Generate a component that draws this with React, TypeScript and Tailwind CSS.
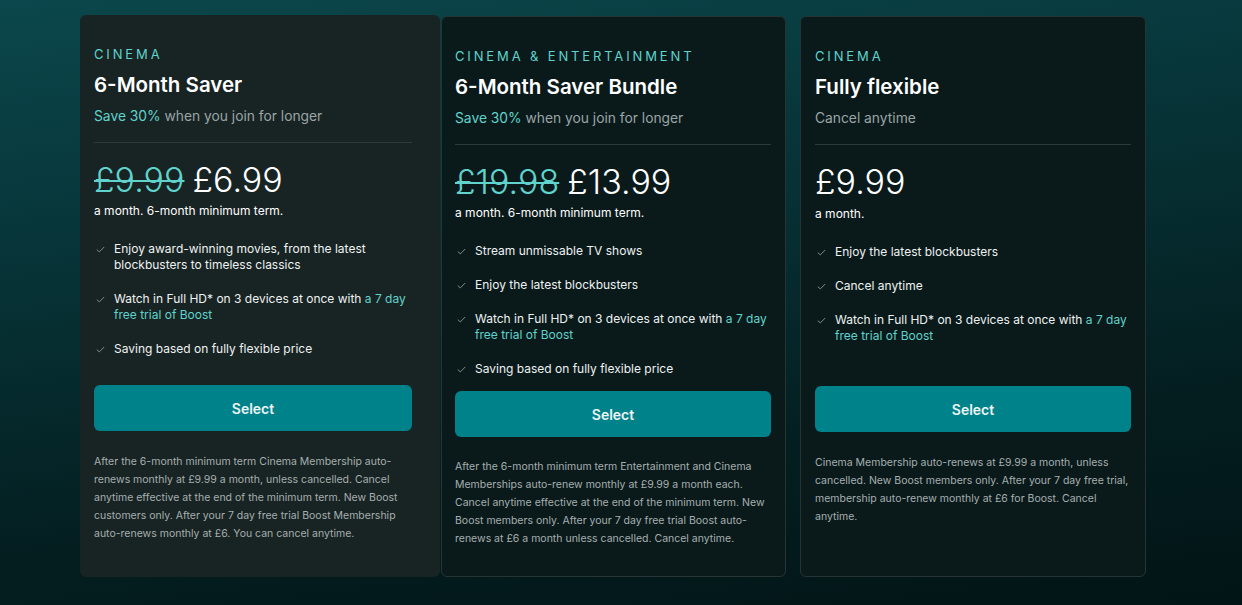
import React from 'react';

type Feature = {
    text: string;
    link?: string;
};

type Plan = {
    category: string;
    title: string;
    save?: string;
    subtitle: string;
    oldPrice?: string;
    price: string;
    term: string;
    features: Feature[];
    disclaimer: string;
};

const plans: Plan[] = [
    {
        category: 'Cinema',
        title: '6-Month Saver',
        save: 'Save 30%',
        subtitle: 'when you join for longer',
        oldPrice: '£9.99',
        price: '£6.99',
        term: 'a month. 6-month minimum term.',
        features: [
            { text: 'Enjoy award-winning movies, from the latest blockbusters to timeless classics' },
            { text: 'Watch in Full HD* on 3 devices at once with ', link: 'a 7 day free trial of Boost' },
            { text: 'Saving based on fully flexible price' },
        ],
        disclaimer:
            'After the 6-month minimum term Cinema Membership auto-renews monthly at £9.99 a month, unless cancelled. Cancel anytime effective at the end of the minimum term. New Boost customers only. After your 7 day free trial Boost Membership auto-renews monthly at £6. You can cancel anytime.',
    },
    {
        category: 'Cinema & Entertainment',
        title: '6-Month Saver Bundle',
        save: 'Save 30%',
        subtitle: 'when you join for longer',
        oldPrice: '£19.98',
        price: '£13.99',
        term: 'a month. 6-month minimum term.',
        features: [
            { text: 'Stream unmissable TV shows' },
            { text: 'Enjoy the latest blockbusters' },
            { text: 'Watch in Full HD* on 3 devices at once with ', link: 'a 7 day free trial of Boost' },
            { text: 'Saving based on fully flexible price' },
        ],
        disclaimer:
            'After the 6-month minimum term Entertainment and Cinema Memberships auto-renew monthly at £9.99 a month each. Cancel anytime effective at the end of the minimum term. New Boost members only. After your 7 day free trial Boost auto-renews at £6 a month unless cancelled. Cancel anytime.',
    },
    {
        category: 'Cinema',
        title: 'Fully flexible',
        subtitle: 'Cancel anytime',
        price: '£9.99',
        term: 'a month.',
        features: [
            { text: 'Enjoy the latest blockbusters' },
            { text: 'Cancel anytime' },
            { text: 'Watch in Full HD* on 3 devices at once with ', link: 'a 7 day free trial of Boost' },
        ],
        disclaimer:
            'Cinema Membership auto-renews at £9.99 a month, unless cancelled. New Boost members only. After your 7 day free trial, membership auto-renew monthly at £6 for Boost. Cancel anytime.',
    },
];

function Check() {
    return (
        <svg width="9" height="7" viewBox="0 0 9 7" fill="none" className="mt-[5px] shrink-0">
            <path d="M0.8 3.6 L3.3 5.9 L8.2 1" stroke="#7f8d8d" strokeWidth="1" />
        </svg>
    );
}

type CardProps = {
    plan: Plan;
    className: string;
    termClass: string;
    buttonClass: string;
    noteClass: string;
};

function PlanCard({ plan, className, termClass, buttonClass, noteClass }: CardProps) {
    return (
        <div className={`flex flex-col rounded-md ${className}`}>
            <div className="text-[13px] leading-4 uppercase tracking-[0.22em] text-[#5fd3cc]">
                {plan.category}
            </div>
            <h2 className="mt-[11px] text-[20.5px] leading-6 font-semibold text-white">
                {plan.title}
            </h2>
            <p className="mt-[9px] text-[13.8px] leading-5 text-[#9aa5a5]">
                {plan.save ? <span className="text-[#5fd3cc]">{plan.save} </span> : null}
                {plan.subtitle}
            </p>
            <hr className="mt-[16px] border-[#2b3a3a]" />
            <div className="mt-[17px] flex items-baseline gap-[8px] text-[34px] leading-10 font-light">
                {plan.oldPrice ? (
                    <span className="text-[#5fd3cc] line-through decoration-[2px]">{plan.oldPrice}</span>
                ) : null}
                <span className="text-white">{plan.price}</span>
            </div>
            <div className={`text-[12px] leading-4 text-white ${termClass}`}>{plan.term}</div>
            <ul className="mt-[22px] flex flex-col gap-[18px]">
                {plan.features.map((f) => (
                    <li key={f.text} className="flex gap-[9px] pl-[2px] text-[12px] leading-4 text-[#eef2f2]">
                        <Check />
                        <p>
                            {f.text}
                            {f.link ? <span className="text-[#5fd3cc]">{f.link}</span> : null}
                        </p>
                    </li>
                ))}
            </ul>
            <button className={`h-[46px] w-full shrink-0 rounded-md bg-[#00828a] text-[14px] font-semibold text-[#eef6f6] ${buttonClass}`}>
                Select
            </button>
            <p className={`text-[10.5px] leading-[18px] text-[#a6afaf] ${noteClass}`}>{plan.disclaimer}</p>
        </div>
    );
}

export default function App() {
    return (
        <div
            className="h-[605px] w-full overflow-hidden bg-[linear-gradient(172deg,#0b474c_0%,#07363a_30%,#041f21_70%,#021415_100%)]"
            style={{ fontFamily: 'Inter, "Noto Sans", sans-serif' }}
        >
            <div className="flex items-start pl-[80px]">
                <PlanCard
                    plan={plans[0]}
                    className="mt-[15px] h-[562px] w-[360px] bg-[#182323] pl-[14px] pr-[28px] pt-[31px]"
                    termClass="mt-[3px]"
                    buttonClass="mt-[28px]"
                    noteClass="mt-[22px]"
                />
                <PlanCard
                    plan={plans[1]}
                    className="ml-[1px] mt-[16px] h-[561px] w-[345px] border border-[#263434] bg-[#0a1a1b] pl-[13px] pr-[14px] pt-[31px]"
                    termClass="mt-[3px]"
                    buttonClass="mt-[14px]"
                    noteClass="mt-[21px]"
                />
                <PlanCard
                    plan={plans[2]}
                    className="ml-[14px] mt-[16px] h-[561px] w-[346px] border border-[#263434] bg-[#0a1a1b] pl-[14px] pr-[14px] pt-[31px]"
                    termClass="mt-[4px]"
                    buttonClass="mt-[42px]"
                    noteClass="mt-[22px]"
                />
            </div>
        </div>
    );
}
